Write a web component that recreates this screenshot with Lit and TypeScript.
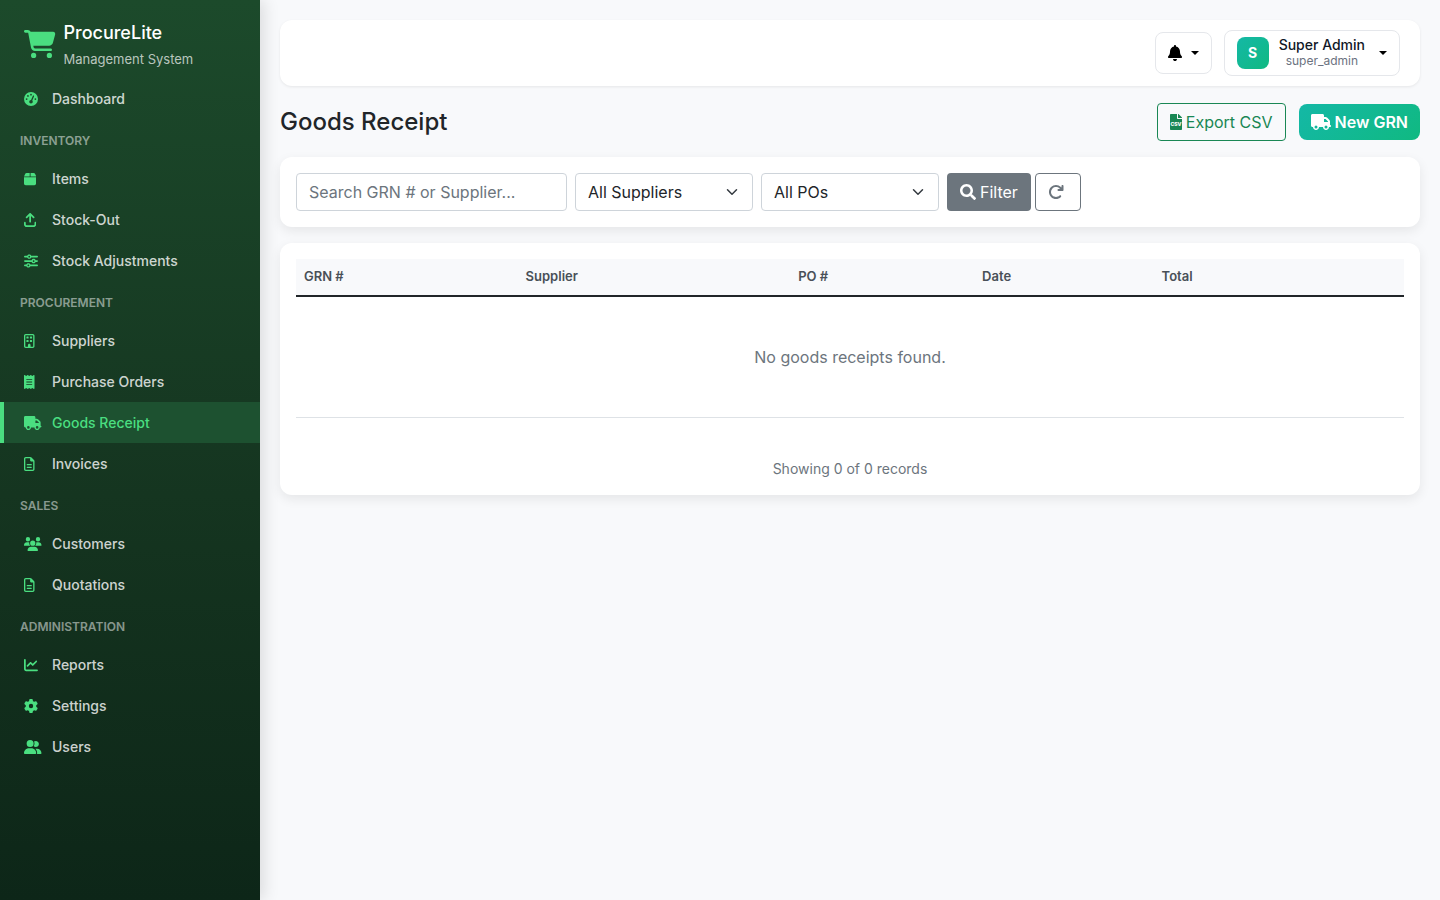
import { LitElement, html, svg, css } from "lit";
import { customElement, property } from "lit/decorators.js";

type Glyph = { w: number; d: string };

const GLYPHS: Record<string, Glyph> = {
  cart: { w: 576, d: "M0 24C0 10.7 10.7 0 24 0H69.5c22 0 41.5 12.8 50.6 32h411c26.3 0 45.5 25 38.6 50.4l-41 152.3c-8.5 31.4-37 53.3-69.5 53.3H170.7l5.4 28.5c2.2 11.3 12.1 19.5 23.6 19.5H488c13.3 0 24 10.7 24 24s-10.7 24-24 24H199.7c-34.6 0-64.3-24.6-70.7-58.5L77.4 54.5c-.7-3.8-4-6.5-7.9-6.5H24C10.7 48 0 37.3 0 24zM128 464a48 48 0 1 1 96 0 48 48 0 1 1 -96 0zm336-48a48 48 0 1 1 0 96 48 48 0 1 1 0-96z" },
  gauge: { w: 512, d: "M0 256a256 256 0 1 1 512 0A256 256 0 1 1 0 256zM288 96a32 32 0 1 0 -64 0 32 32 0 1 0 64 0zM256 416c35.3 0 64-28.7 64-64c0-17.4-6.9-33.1-18.1-44.6L366 161.7c5.3-12.1-.2-26.3-12.3-31.6s-26.3 .2-31.6 12.3L257.9 288c-.6 0-1.3 0-1.9 0c-35.3 0-64 28.7-64 64s28.7 64 64 64zM176 144a32 32 0 1 0 -64 0 32 32 0 1 0 64 0zM96 288a32 32 0 1 0 0-64 32 32 0 1 0 0 64zm352-32a32 32 0 1 0 -64 0 32 32 0 1 0 64 0z" },
  box: { w: 448, d: "M50.7 58.5L0 160H208V32H93.7C75.5 32 58.9 42.3 50.7 58.5zM240 160H448L397.3 58.5C389.1 42.3 372.5 32 354.3 32H240V160zm208 32H0V416c0 35.3 28.7 64 64 64H384c35.3 0 64-28.7 64-64V192z" },
  upload: { w: 448, d: "M246.6 9.4c-12.5-12.5-32.8-12.5-45.3 0l-128 128c-12.5 12.5-12.5 32.8 0 45.3s32.8 12.5 45.3 0L192 109.3V320c0 17.7 14.3 32 32 32s32-14.3 32-32V109.3l73.4 73.4c12.5 12.5 32.8 12.5 45.3 0s12.5-32.8 0-45.3l-128-128zM64 352c0-17.7-14.3-32-32-32s-32 14.3-32 32v64c0 53 43 96 96 96H352c53 0 96-43 96-96V352c0-17.7-14.3-32-32-32s-32 14.3-32 32v64c0 17.7-14.3 32-32 32H96c-17.7 0-32-14.3-32-32V352z" },
  sliders: { w: 512, d: "M0 416c0 17.7 14.3 32 32 32l54.7 0c12.3 28.3 40.5 48 73.3 48s61-19.7 73.3-48L480 448c17.7 0 32-14.3 32-32s-14.3-32-32-32l-246.7 0c-12.3-28.3-40.5-48-73.3-48s-61 19.7-73.3 48L32 384c-17.7 0-32 14.3-32 32zm128 0a32 32 0 1 1 64 0 32 32 0 1 1 -64 0zM320 256a32 32 0 1 1 64 0 32 32 0 1 1 -64 0zm32-80c-32.8 0-61 19.7-73.3 48L32 224c-17.7 0-32 14.3-32 32s14.3 32 32 32l246.7 0c12.3 28.3 40.5 48 73.3 48s61-19.7 73.3-48l54.7 0c17.7 0 32-14.3 32-32s-14.3-32-32-32l-54.7 0c-12.3-28.3-40.5-48-73.3-48zM192 128a32 32 0 1 1 0-64 32 32 0 1 1 0 64zm73.3-64C253 35.7 224.8 16 192 16s-61 19.7-73.3 48L32 64C14.3 64 0 78.3 0 96s14.3 32 32 32l86.7 0c12.3 28.3 40.5 48 73.3 48s61-19.7 73.3-48L480 128c17.7 0 32-14.3 32-32s-14.3-32-32-32L265.3 64z" },
  building: { w: 384, d: "M64 48c-8.8 0-16 7.2-16 16V448c0 8.8 7.2 16 16 16h80V400c0-26.5 21.5-48 48-48s48 21.5 48 48v64h80c8.8 0 16-7.2 16-16V64c0-8.8-7.2-16-16-16H64zM0 64C0 28.7 28.7 0 64 0H320c35.3 0 64 28.7 64 64V448c0 35.3-28.7 64-64 64H64c-35.3 0-64-28.7-64-64V64zm88 40c0-8.8 7.2-16 16-16h48c8.8 0 16 7.2 16 16v48c0 8.8-7.2 16-16 16H104c-8.8 0-16-7.2-16-16V104zM232 88h48c8.8 0 16 7.2 16 16v48c0 8.8-7.2 16-16 16H232c-8.8 0-16-7.2-16-16V104c0-8.8 7.2-16 16-16zM88 232c0-8.8 7.2-16 16-16h48c8.8 0 16 7.2 16 16v48c0 8.8-7.2 16-16 16H104c-8.8 0-16-7.2-16-16V232zm144-16h48c8.8 0 16 7.2 16 16v48c0 8.8-7.2 16-16 16H232c-8.8 0-16-7.2-16-16V232c0-8.8 7.2-16 16-16z" },
  receipt: { w: 384, d: "M14 2.2C22.5-1.7 32.5-.3 39.6 5.8L80 40.4 120.4 5.8c9-7.7 22.3-7.7 31.2 0L192 40.4 232.4 5.8c9-7.7 22.3-7.7 31.2 0L304 40.4 344.4 5.8c7.1-6.1 17.1-7.5 25.6-3.6s14 12.4 14 21.8V488c0 9.4-5.5 17.9-14 21.8s-18.5 2.5-25.6-3.6L304 471.6l-40.4 34.6c-9 7.7-22.3 7.7-31.2 0L192 471.6l-40.4 34.6c-9 7.7-22.3 7.7-31.2 0L80 471.6 39.6 506.2c-7.1 6.1-17.1 7.5-25.6 3.6S0 497.4 0 488V24C0 14.6 5.5 6.1 14 2.2zM96 144c-8.8 0-16 7.2-16 16s7.2 16 16 16H288c8.8 0 16-7.2 16-16s-7.2-16-16-16H96zM80 352c0 8.8 7.2 16 16 16H288c8.8 0 16-7.2 16-16s-7.2-16-16-16H96c-8.8 0-16 7.2-16 16zM96 240c-8.8 0-16 7.2-16 16s7.2 16 16 16H288c8.8 0 16-7.2 16-16s-7.2-16-16-16H96z" },
  truck: { w: 640, d: "M48 0C21.5 0 0 21.5 0 48V368c0 26.5 21.5 48 48 48H64c0 53 43 96 96 96s96-43 96-96H384c0 53 43 96 96 96s96-43 96-96h32c17.7 0 32-14.3 32-32s-14.3-32-32-32V288 256 237.3c0-17-6.7-33.3-18.7-45.3L512 114.7c-12-12-28.3-18.7-45.3-18.7H416V48c0-26.5-21.5-48-48-48H48zM416 160h50.7L544 237.3V256H416V160zM112 416a48 48 0 1 1 96 0 48 48 0 1 1 -96 0zm368-48a48 48 0 1 1 0 96 48 48 0 1 1 0-96z" },
  file: { w: 384, d: "M64 464c-8.8 0-16-7.2-16-16V64c0-8.8 7.2-16 16-16H224v80c0 17.7 14.3 32 32 32h80V448c0 8.8-7.2 16-16 16H64zM64 0C28.7 0 0 28.7 0 64V448c0 35.3 28.7 64 64 64H320c35.3 0 64-28.7 64-64V154.5c0-17-6.7-33.3-18.7-45.3L274.7 18.7C262.7 6.7 246.5 0 229.5 0H64zm56 256c-13.3 0-24 10.7-24 24s10.7 24 24 24H264c13.3 0 24-10.7 24-24s-10.7-24-24-24H120zm0 96c-13.3 0-24 10.7-24 24s10.7 24 24 24H264c13.3 0 24-10.7 24-24s-10.7-24-24-24H120z" },
  users: { w: 640, d: "M144 0a80 80 0 1 1 0 160A80 80 0 1 1 144 0zM512 0a80 80 0 1 1 0 160A80 80 0 1 1 512 0zM0 298.7C0 239.8 47.8 192 106.7 192h42.7c15.9 0 31 3.5 44.6 9.7c-1.3 7.2-1.9 14.7-1.9 22.3c0 38.2 16.8 72.5 43.3 96c-.2 0-.4 0-.7 0H21.3C9.6 320 0 310.4 0 298.7zM405.3 320c-.2 0-.4 0-.7 0c26.6-23.5 43.3-57.8 43.3-96c0-7.6-.7-15-1.9-22.3c13.6-6.3 28.7-9.7 44.6-9.7h42.7C592.2 192 640 239.8 640 298.7c0 11.8-9.6 21.3-21.3 21.3H405.3zM224 224a96 96 0 1 1 192 0 96 96 0 1 1 -192 0zM128 485.3C128 411.7 187.7 352 261.3 352H378.7C452.3 352 512 411.7 512 485.3c0 14.7-11.9 26.7-26.7 26.7H154.7c-14.7 0-26.7-11.9-26.7-26.7z" },
  chart: { w: 512, d: "M64 64c0-17.7-14.3-32-32-32S0 46.3 0 64V400c0 44.2 35.8 80 80 80H480c17.7 0 32-14.3 32-32s-14.3-32-32-32H80c-8.8 0-16-7.2-16-16V64zm406.6 86.6c12.5-12.5 12.5-32.8 0-45.3s-32.8-12.5-45.3 0L320 210.7l-57.4-57.4c-12.5-12.5-32.8-12.5-45.3 0l-112 112c-12.5 12.5-12.5 32.8 0 45.3s32.8 12.5 45.3 0L240 221.3l57.4 57.4c12.5 12.5 32.8 12.5 45.3 0l128-128z" },
  gear: { w: 512, d: "M495.9 166.6c3.2 8.7 .5 18.4-6.4 24.6l-43.3 39.4c1.1 8.3 1.7 16.8 1.7 25.4s-.6 17.1-1.7 25.4l43.3 39.4c6.9 6.2 9.6 15.9 6.4 24.6c-4.4 11.9-9.7 23.3-15.8 34.3l-4.7 8.1c-6.6 11-14 21.4-22.1 31.2c-5.9 7.2-15.7 9.6-24.5 6.8l-55.7-17.7c-13.4 10.3-28.2 18.9-44 25.4l-12.5 57.1c-2 9.1-9 16.3-18.2 17.8c-13.8 2.3-28 3.5-42.5 3.5s-28.7-1.2-42.5-3.5c-9.2-1.5-16.2-8.7-18.2-17.8l-12.5-57.1c-15.8-6.5-30.6-15.1-44-25.4L83.1 425.9c-8.8 2.8-18.6 .3-24.5-6.8c-8.1-9.8-15.5-20.2-22.1-31.2l-4.7-8.1c-6.1-11-11.4-22.4-15.8-34.3c-3.2-8.7-.5-18.4 6.4-24.6l43.3-39.4C64.6 273.1 64 264.6 64 256s.6-17.1 1.7-25.4L22.4 191.2c-6.9-6.2-9.6-15.9-6.4-24.6c4.4-11.9 9.7-23.3 15.8-34.3l4.7-8.1c6.6-11 14-21.4 22.1-31.2c5.9-7.2 15.7-9.6 24.5-6.8l55.7 17.7c13.4-10.3 28.2-18.9 44-25.4l12.5-57.1c2-9.1 9-16.3 18.2-17.8C227.3 1.2 241.5 0 256 0s28.7 1.2 42.5 3.5c9.2 1.5 16.2 8.7 18.2 17.8l12.5 57.1c15.8 6.5 30.6 15.1 44 25.4l55.7-17.7c8.8-2.8 18.6-.3 24.5 6.8c8.1 9.8 15.5 20.2 22.1 31.2l4.7 8.1c6.1 11 11.4 22.4 15.8 34.3zM256 336a80 80 0 1 0 0-160 80 80 0 1 0 0 160z" },
  group: { w: 640, d: "M96 128a128 128 0 1 1 256 0A128 128 0 1 1 96 128zM0 482.3C0 383.8 79.8 304 178.3 304h91.4C368.2 304 448 383.8 448 482.3c0 16.4-13.3 29.7-29.7 29.7H29.7C13.3 512 0 498.7 0 482.3zM609.3 512H471.4c5.4-9.4 8.6-20.3 8.6-32v-8c0-60.7-27.1-115.2-69.8-151.8c2.4-.1 4.7-.2 7.1-.2h61.4C567.8 320 640 392.2 640 481.3c0 17-13.8 30.7-30.7 30.7zM432 256c-31 0-59-12.6-79.3-32.9C372.4 196.5 384 163.6 384 128c0-26.8-6.6-52.1-18.3-74.3C384.3 40.1 407.2 32 432 32c61.9 0 112 50.1 112 112s-50.1 112-112 112z" },
  bell: { w: 448, d: "M224 0c-17.7 0-32 14.3-32 32V51.2C119 66 64 130.6 64 208v18.8c0 47-17.3 92.4-48.5 127.6l-7.4 8.3c-8.4 9.4-10.4 22.9-5.3 34.4S19.4 416 32 416H416c12.6 0 24-7.4 29.2-18.9s3.1-25-5.3-34.4l-7.4-8.3C401.3 319.2 384 273.9 384 226.8V208c0-77.4-55-142-128-156.8V32c0-17.7-14.3-32-32-32zm45.3 493.3c12-12 18.7-28.3 18.7-45.3H224 160c0 17 6.7 33.3 18.7 45.3s28.3 18.7 45.3 18.7s33.3-6.7 45.3-18.7z" },
  csv: { w: 384, d: "M224 136V0H24C10.7 0 0 10.7 0 24v464c0 13.3 10.7 24 24 24h336c13.3 0 24-10.7 24-24V160H248c-13.2 0-24-10.8-24-24zM384 121.9v6.1H256V0h6.1c6.4 0 12.5 2.5 17 7l97.9 98c4.5 4.5 7 10.6 7 16.9z" },
  search: { w: 512, d: "M505 442.7L405.3 343c-4.5-4.5-10.6-7-17-7H372c27.6-35.3 44-79.7 44-128C416 93.1 322.9 0 208 0S0 93.1 0 208s93.1 208 208 208c48.3 0 92.7-16.4 128-44v16.3c0 6.4 2.5 12.5 7 17l99.7 99.7c9.4 9.4 24.6 9.4 33.9 0l28.3-28.3c9.4-9.4 9.4-24.6.1-34zM208 336c-70.7 0-128-57.2-128-128 0-70.7 57.2-128 128-128 70.7 0 128 57.2 128 128 0 70.7-57.2 128-128 128z" },
  reload: { w: 512, d: "M386.3 160H336c-17.7 0-32 14.3-32 32s14.3 32 32 32H464c17.7 0 32-14.3 32-32V64c0-17.7-14.3-32-32-32s-32 14.3-32 32v51.2L414.4 97.6c-87.5-87.5-229.3-87.5-316.8 0s-87.5 229.3 0 316.8s229.3 87.5 316.8 0c12.5-12.5 12.5-32.8 0-45.3s-32.8-12.5-45.3 0c-62.5 62.5-163.8 62.5-226.3 0s-62.5-163.8 0-226.3s163.8-62.5 226.3 0L386.3 160z" },
};

@customElement("ui-icon")
class UiIcon extends LitElement {
  @property() name = "box";

  // Height follows the host's font size, width follows the glyph's own ratio.
  static styles = css`
    :host { display: inline-flex; flex: none; }
    svg { display: block; height: 1em; width: auto; fill: currentColor; }
    .tag { font: 800 165px "Inter", sans-serif; fill: #fff; text-anchor: middle; }
  `;

  render() {
    const g = GLYPHS[this.name];
    return html`<svg viewBox="0 0 ${g.w} 512" aria-hidden="true">
      <path d=${g.d}></path>
      ${this.name === "csv" ? svg`<text class="tag" x="192" y="390">CSV</text>` : ""}
    </svg>`;
  }
}

type Entry = { icon: string; label: string };
const MENU: { title?: string; items: Entry[] }[] = [
  { items: [{ icon: "gauge", label: "Dashboard" }] },
  { title: "Inventory", items: [
    { icon: "box", label: "Items" },
    { icon: "upload", label: "Stock-Out" },
    { icon: "sliders", label: "Stock Adjustments" },
  ] },
  { title: "Procurement", items: [
    { icon: "building", label: "Suppliers" },
    { icon: "receipt", label: "Purchase Orders" },
    { icon: "truck", label: "Goods Receipt" },
    { icon: "file", label: "Invoices" },
  ] },
  { title: "Sales", items: [
    { icon: "users", label: "Customers" },
    { icon: "file", label: "Quotations" },
  ] },
  { title: "Administration", items: [
    { icon: "chart", label: "Reports" },
    { icon: "gear", label: "Settings" },
    { icon: "group", label: "Users" },
  ] },
];

@customElement("side-nav")
class SideNav extends LitElement {
  @property() current = "";

  static styles = css`
    :host {
      box-sizing: border-box;
      display: block;
      min-height: 100vh;
      padding-top: 20px;
      background: linear-gradient(180deg, #1c4a2b 0%, #153520 55%, #0d2618 100%);
      box-shadow: 4px 0 15px rgba(0, 0, 0, 0.12);
      color: #fff;
    }
    .brand { display: flex; align-items: flex-start; gap: 8px; padding: 0 20px 0 24px; }
    .brand ui-icon { padding-top: 10px; font-size: 28px; color: #4ade80; }
    .name { font-size: 18px; line-height: 26px; font-weight: 500; }
    .sub { font-size: 13px; line-height: 26px; color: rgba(255, 255, 255, 0.7); }
    nav { padding-top: 6px; }
    .title {
      margin: 0;
      padding: 14px 20px 10px;
      font-size: 12px;
      line-height: 15px;
      font-weight: 600;
      text-transform: uppercase;
      color: rgba(255, 255, 255, 0.5);
    }
    .link {
      display: flex;
      align-items: center;
      padding: 0 20px;
      border-left: 4px solid transparent;
      line-height: 41px;
      font-size: 14px;
      font-weight: 500;
      color: rgba(255, 255, 255, 0.8);
      text-decoration: none;
    }
    .link ui-icon { width: 28px; color: #4ade80; }
    .link.active { border-left-color: #4ade80; background: #1d5130; color: #4ade80; }
  `;

  render() {
    return html`
      <div class="brand">
        <ui-icon name="cart"></ui-icon>
        <div><div class="name">ProcureLite</div><div class="sub">Management System</div></div>
      </div>
      <nav aria-label="Main">
        ${MENU.map((group) => html`
          ${group.title ? html`<h2 class="title">${group.title}</h2>` : ""}
          ${group.items.map((item) => html`
            <a class="link ${item.label === this.current ? "active" : ""}" href="#"
              ><ui-icon name=${item.icon}></ui-icon>${item.label}</a>`)}
        `)}
      </nav>`;
  }
}

@customElement("app-root")
class AppRoot extends LitElement {
  static styles = css`
    :host {
      display: grid;
      grid-template-columns: 260px minmax(0, 1fr);
      min-height: 100vh;
      background: #f8f9fb;
      color: #212529;
      font: 400 16px/24px "Inter", sans-serif;
    }
    * { box-sizing: border-box; }
    button, input, select { font: inherit; margin: 0; }
    button { cursor: pointer; }
    main { display: flex; flex-direction: column; gap: 16px; padding: 20px; }
    .card { background: #fff; border-radius: 12px; padding: 16px; box-shadow: 0 4px 12px rgba(0, 0, 0, 0.08); }

    .topbar {
      display: flex;
      justify-content: flex-end;
      align-items: center;
      gap: 12px;
      padding: 10px 20px;
      border-radius: 12px;
      background: #fff;
      box-shadow: 0 1px 3px rgba(0, 0, 0, 0.08);
    }
    .drop {
      display: flex;
      align-items: center;
      border: 1px solid #e5e7eb;
      border-radius: 8px;
      padding: 0 12px;
      background: #fff;
      color: #000;
    }
    .bell { height: 42px; gap: 9px; }
    .user { height: 46px; gap: 10px; }
    .caret { border: 4px solid transparent; border-top-color: currentColor; border-bottom: 0; }
    .user .caret { margin-left: 4px; }
    .avatar {
      display: grid;
      place-items: center;
      width: 32px;
      height: 32px;
      border-radius: 8px;
      background: linear-gradient(135deg, #14b8a6, #10b981);
      color: #fff;
      font-size: 14px;
      font-weight: 700;
    }
    .who { display: grid; justify-items: center; }
    .who-name { font-size: 14px; line-height: 16px; font-weight: 500; color: #111827; }
    .who-role { font-size: 12px; line-height: 16px; color: #6b7280; }

    .head { display: flex; align-items: center; gap: 13px; padding-top: 1px; }
    h1 { flex: 1; margin: 0; font-size: 24px; line-height: 28px; font-weight: 500; }
    .btn {
      display: inline-flex;
      align-items: center;
      gap: 4px;
      height: 38px;
      padding: 0 12px;
      border: 1px solid transparent;
      border-radius: 4px;
      background: transparent;
    }
    .outline { border-color: #198754; color: #198754; }
    .primary {
      height: 36px;
      border: 0;
      border-radius: 8px;
      background: linear-gradient(135deg, #14b8a6, #10b981);
      color: #fff;
      font-weight: 600;
    }
    .solid { background: #6c757d; color: #fff; }
    .reset { border-color: #6c757d; color: #6c757d; padding-right: 16px; }

    .filters { display: flex; gap: 8px; }
    .field {
      height: 38px;
      border: 1px solid #ced4da;
      border-radius: 4px;
      padding: 0 12px;
      background: #fff;
      color: #212529;
    }
    .query { width: 271px; }
    .query::placeholder { color: #6c757d; opacity: 1; }
    .pick { position: relative; display: flex; align-items: center; width: 178px; }
    .pick select { width: 100%; appearance: none; }
    .pick svg { position: absolute; right: 13px; width: 16px; height: 12px; pointer-events: none; }
    .actions { display: flex; gap: 4px; }

    table { width: 100%; border-collapse: collapse; }
    th {
      padding: 7px 8px 9px;
      border-bottom: 2px solid #212529;
      background: #f8f9fb;
      text-align: left;
      font-size: 13px;
      line-height: 20px;
      font-weight: 600;
      color: #495057;
    }
    .c1 { width: 20%; }
    .c2 { width: 24.6%; }
    .c3 { width: 16.6%; }
    .c4 { width: 16.2%; }
    .empty { padding: 48px 8px; border-bottom: 1px solid #dee2e6; text-align: center; color: #6c757d; }
    .count { margin: 0; padding-top: 41px; font-size: 14px; line-height: 20px; text-align: center; color: #6c757d; }
  `;

  private picker(label: string) {
    return html`<span class="pick">
      <select class="field" aria-label=${label}><option>${label}</option></select>
      <svg viewBox="0 0 16 16" aria-hidden="true">
        <path d="m2 5 6 6 6-6" fill="none" stroke="#343a40" stroke-width="2" stroke-linecap="round" stroke-linejoin="round"></path>
      </svg>
    </span>`;
  }

  render() {
    return html`
      <side-nav current="Goods Receipt"></side-nav>
      <main>
        <header class="topbar">
          <button class="drop bell" aria-label="Notifications">
            <ui-icon name="bell"></ui-icon><span class="caret"></span>
          </button>
          <button class="drop user">
            <span class="avatar">S</span>
            <span class="who"><span class="who-name">Super Admin</span><span class="who-role">super_admin</span></span>
            <span class="caret"></span>
          </button>
        </header>
        <div class="head">
          <h1>Goods Receipt</h1>
          <button class="btn outline"><ui-icon name="csv"></ui-icon>Export CSV</button>
          <button class="btn primary"><ui-icon name="truck"></ui-icon>New GRN</button>
        </div>
        <form class="card filters">
          <input class="field query" type="text" aria-label="Search" placeholder="Search GRN # or Supplier..." />
          ${this.picker("All Suppliers")} ${this.picker("All POs")}
          <div class="actions">
            <button class="btn solid" type="button"><ui-icon name="search"></ui-icon>Filter</button>
            <button class="btn reset" type="reset" aria-label="Reset filters"><ui-icon name="reload"></ui-icon></button>
          </div>
        </form>
        <section class="card">
          <table>
            <thead>
              <tr><th class="c1">GRN #</th><th class="c2">Supplier</th><th class="c3">PO #</th><th class="c4">Date</th><th>Total</th></tr>
            </thead>
            <tbody>
              <tr><td class="empty" colspan="5">No goods receipts found.</td></tr>
            </tbody>
          </table>
          <p class="count">Showing 0 of 0 records</p>
        </section>
      </main>`;
  }
}
